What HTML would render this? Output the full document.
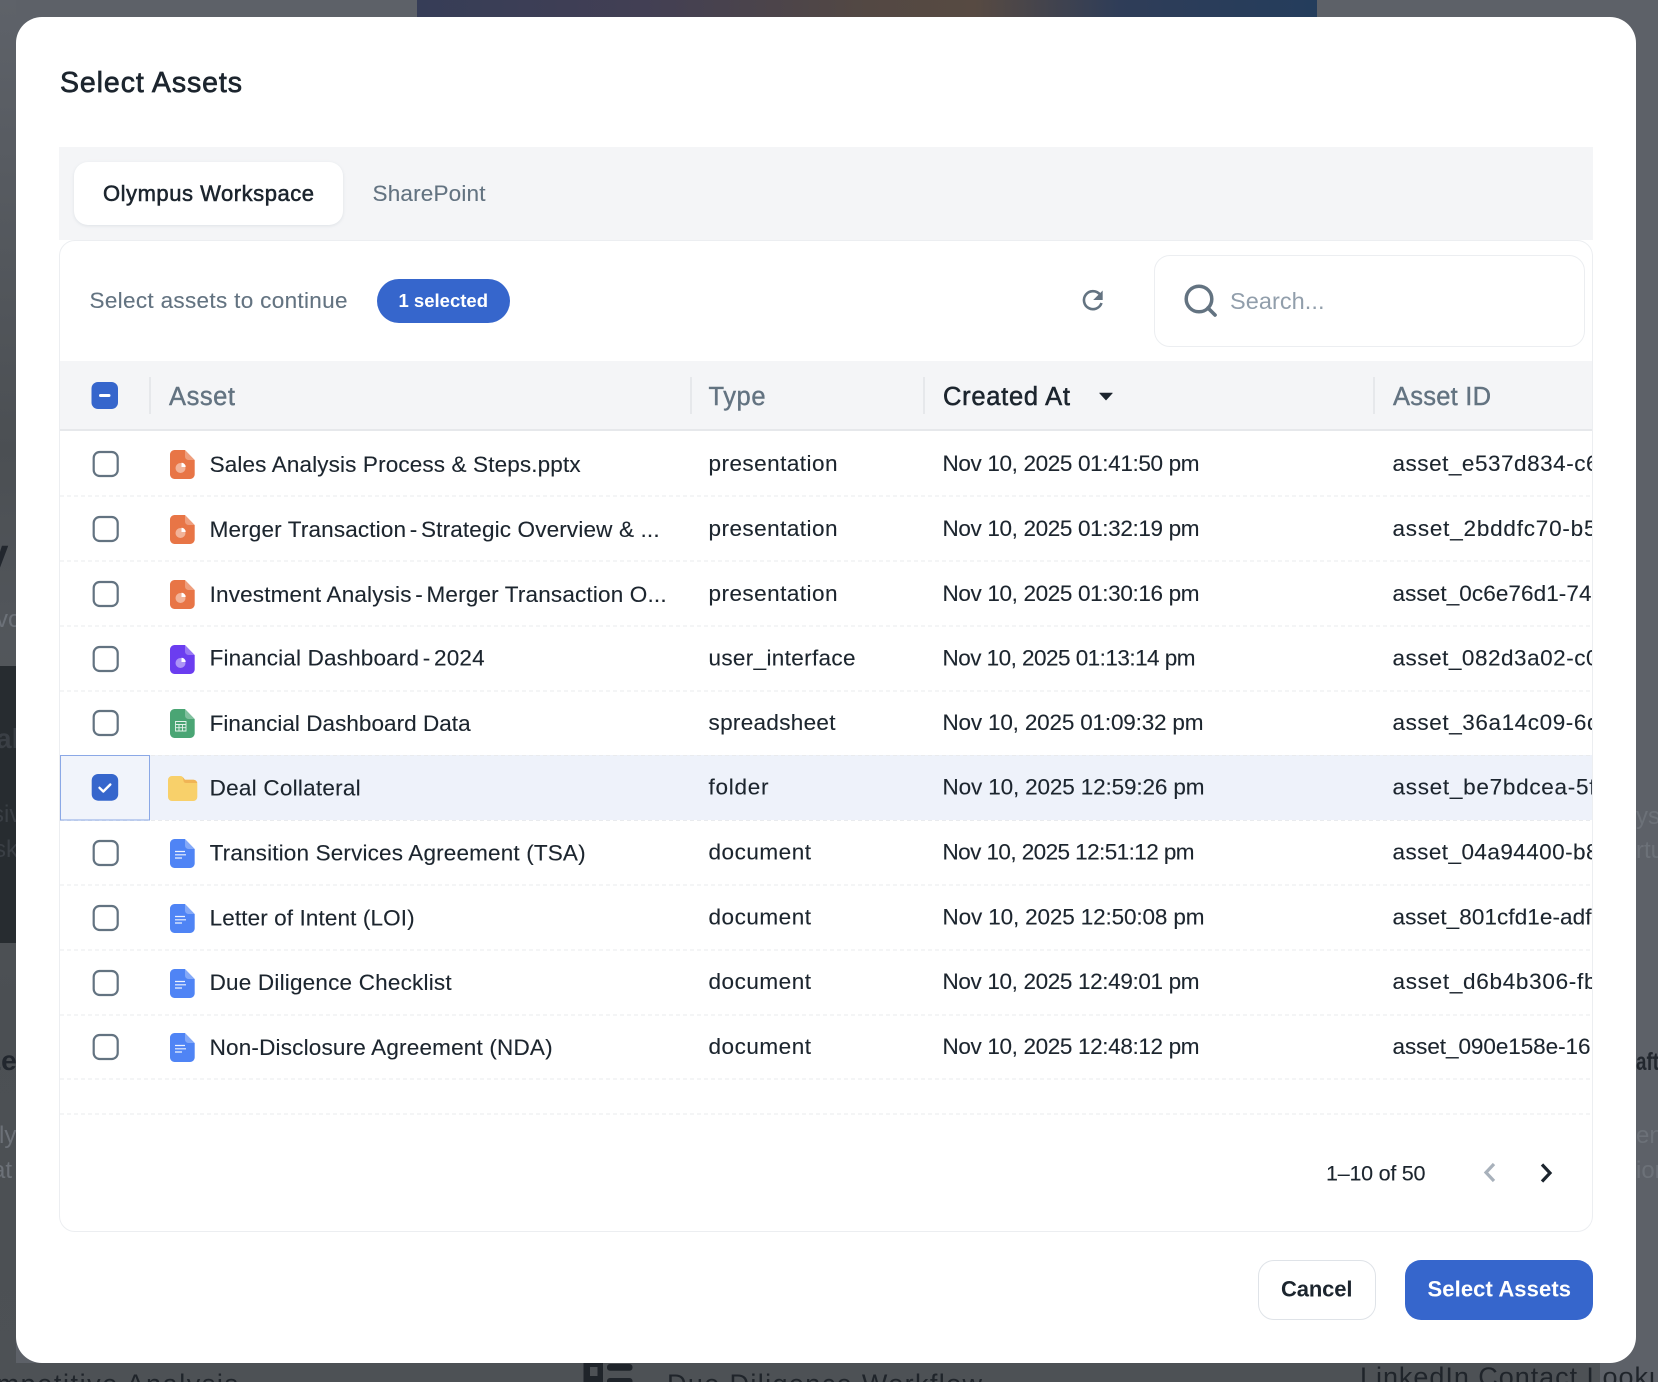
<!DOCTYPE html>
<html lang="en"><head><meta charset="utf-8"><title>Select Assets</title>
<style>
*{box-sizing:border-box}
html,body{margin:0;padding:0;width:1658px;height:1382px;overflow:hidden;background:#5d6168;font-family:"Liberation Sans",sans-serif}
.a{position:absolute}
svg{position:absolute;left:0;top:0}
text{font-family:"Liberation Sans",sans-serif;fill:#1c252e;font-size:22.5px;stroke:#1c252e;stroke-width:.12px}
.g{fill:#637381;stroke:#637381}
.m{stroke-width:.4px}
.h{font-size:25.5px}
.bgd{fill:#22272e;stroke:none;font-weight:bold;font-size:28px}
.bgl{fill:#6c7178;stroke:none;font-size:24px}
.bgb{fill:#1f242a;stroke:none;font-size:27px}
.t{word-spacing:-2.8px}
</style></head><body>
<div class="a" style="left:0;top:0;width:1658px;height:1382px;overflow:hidden">
  <div class="a" style="left:0;top:0;width:16px;height:1382px;background:linear-gradient(180deg,#5e6269 0,#4b4f53 450px,#52565b 640px,#4b4f53 1000px,#4d5155 100%)"></div>
  <div class="a" style="left:0;top:666px;width:16px;height:277px;background:#272c30"></div>
  <div class="a" style="left:0;top:1363px;width:1600px;height:19px;background:#4d5155"></div>
  <div class="a" style="left:417px;top:0;width:900px;height:18px;background:linear-gradient(90deg,#363d57 0,#423f54 25%,#534843 50%,#574a42 62%,#2f3d58 78%,#243d5c 100%)"></div>
</div>
<svg width="1658" height="1382" viewBox="0 0 1658 1382">
  <text x="-16" y="569" class="bgd" style="font-size:44px">y</text>
  <text x="-4" y="627" class="bgl">vo</text>
  <text x="-4" y="748" class="bgd" style="fill:#3a3f45;font-size:28px">al</text>
  <text x="-8" y="822" class="bgl" style="fill:#3a3f45">siv</text>
  <text x="-6" y="857" class="bgl" style="fill:#3a3f45">sk</text>
  <text x="-16" y="1070" class="bgd">Le</text>
  <text x="-1" y="1143" class="bgl">ly</text>
  <text x="-8" y="1178" class="bgl">at</text>
  <text x="1636" y="824" class="bgl">ys</text>
  <text x="1636" y="858" class="bgl">rtu</text>
  <text x="1636" y="1070" class="bgd" style="font-size:25px" textLength="23" lengthAdjust="spacingAndGlyphs">aft</text>
  <text x="1636" y="1143" class="bgl">en</text>
  <text x="1636" y="1178" class="bgl">ion</text>
  <text x="-20" y="1393" class="bgb" textLength="258">ompetitive Analysis</text>
  <text x="667" y="1393" class="bgb" textLength="315">Due Diligence Workflow</text>
  <text x="1360" y="1386" class="bgb" textLength="320">LinkedIn Contact Lookup</text>
  <path d="M583.500 1363H603V1382H583.500ZM590 1367V1376H597.500V1367Z" fill="#1f242a" fill-rule="evenodd"/>
  <rect x="607" y="1364" width="25.500" height="6.700" rx="3" fill="#1f242a"/>
  <rect x="607" y="1378" width="25.500" height="6.700" rx="3" fill="#1f242a"/>
</svg>

<div class="a" style="left:16px;top:17px;width:1620px;height:1346px;background:#fff;border-radius:26px"></div>
<div class="a" style="left:59px;top:147px;width:1534px;height:93px;background:#f4f5f7"></div>
<div class="a" style="left:74px;top:162px;width:269px;height:63px;background:#fff;border-radius:14px;box-shadow:0 1px 3px rgba(145,158,171,.22)"></div>
<div class="a" style="left:59px;top:240px;width:1534px;height:992px;background:#fff;border:1.5px solid #eceef1;border-radius:16px;overflow:hidden">
  <div class="a" style="left:0;top:119.5px;width:100%;height:70.500px;background:#f4f5f7;border-bottom:2px solid #e6e8eb"></div>
  <div class="a" style="left:90px;top:514px;width:1444px;height:65px;background:#eef2fa"></div>
</div>
<div class="a" style="left:149px;top:377px;width:2px;height:37px;background:#e6e8eb"></div>
<div class="a" style="left:689.500px;top:377px;width:2px;height:37px;background:#e6e8eb"></div>
<div class="a" style="left:923px;top:377px;width:2px;height:37px;background:#e6e8eb"></div>
<div class="a" style="left:1373px;top:377px;width:2px;height:37px;background:#e6e8eb"></div>
<div class="a" style="left:377px;top:279px;width:133px;height:44px;background:#3666cc;border-radius:22px"></div>
<div class="a" style="left:1154px;top:255px;width:431px;height:92px;background:#fff;border:1.5px solid #eceef1;border-radius:16px"></div>
<div class="a" style="left:1258px;top:1260px;width:118px;height:60px;background:#fff;border:1.5px solid #dfe3e8;border-radius:16px"></div>
<div class="a" style="left:1405px;top:1260px;width:188px;height:60px;background:#3666cc;border-radius:16px"></div>

<svg width="1658" height="1382" viewBox="0 0 1658 1382">
<defs>
  <clipPath id="idc"><rect x="1390" y="430" width="202" height="650"/></clipPath>
  <g id="dash"><path d="M60 0H1592" stroke="#e9ebee" stroke-width="1" stroke-dasharray="4 3" fill="none"/></g>
  <path id="doc" d="M4.500 0H15L24.700 10V24.500a4.500 4.500 0 0 1-4.500 4.500H4.500A4.500 4.500 0 0 1 0 24.500V4.500A4.500 4.500 0 0 1 4.500 0Z"/>
  <path id="fold" d="M15 0L24.700 10H18.500a3.500 3.500 0 0 1-3.500-3.500Z" fill="#fff" fill-opacity=".3"/>
  <g id="ppt"><use href="#doc" fill="#e87546"/><use href="#fold"/><circle cx="10.500" cy="18" r="5" fill="#fff" fill-opacity=".45"/><path d="M11.500 17V12.800a4.200 4.200 0 0 1 4.200 4.200Z" fill="#fff"/></g>
  <g id="ui"><use href="#doc" fill="#6b3df0"/><use href="#fold"/><circle cx="10.500" cy="18" r="5" fill="#fff" fill-opacity=".45"/><path d="M11.500 17V12.800a4.200 4.200 0 0 1 4.200 4.200Z" fill="#fff"/></g>
  <g id="xls"><use href="#doc" fill="#4aa574"/><use href="#fold"/><path d="M5.500 12.500h10.500v9.500H5.500ZM5.500 15.500h10.500M5.500 18.700h10.500M9 15.500V22M12.500 15.500V22" fill="none" stroke="#fff" stroke-opacity=".85" stroke-width=".9"/></g>
  <g id="dc"><use href="#doc" fill="#4f84f5"/><use href="#fold"/><path d="M5 12.500h10M5 15.800h11M5 19h7" stroke="#fff" stroke-opacity=".9" stroke-width="1.200" fill="none"/></g>
  <rect id="cb" x="1" y="1" width="24" height="24" rx="6" fill="#fff" stroke="#637381" stroke-width="2.200"/>
</defs>

<text x="60" y="92" textLength="182" style="font-size:28.500px;stroke-width:.7px">Select Assets</text>
<text x="103" y="201" textLength="211" style="font-size:22px;stroke-width:.55px">Olympus Workspace</text>
<text x="372.500" y="201" textLength="113" class="g" style="font-size:22.500px">SharePoint</text>
<text x="89.500" y="308" textLength="258" class="g">Select assets to continue</text>
<text x="398.500" y="307" textLength="89.500" style="fill:#fff;stroke:#fff;font-weight:bold;font-size:18.500px;stroke-width:0">1 selected</text>
<text x="1230" y="309" textLength="94.500" style="fill:#919eab;stroke:none;font-size:23.500px">Search...</text>

<path d="M1099.700 294.200A9 9 0 1 0 1101.500 303" fill="none" stroke="#637381" stroke-width="2.600"/>
<path d="M1102.700 290.500V300H1093.200Z" fill="#637381"/>
<circle cx="1199" cy="299" r="12.800" fill="none" stroke="#637381" stroke-width="3.500"/>
<path d="M1208 308L1215 315" stroke="#637381" stroke-width="3.700" stroke-linecap="round"/>

<rect x="91.500" y="382" width="26.500" height="27" rx="6.500" fill="#3666cc"/>
<rect x="99" y="394" width="11.500" height="3" rx="1.500" fill="#fff"/>
<text x="169" y="405" textLength="66" class="g h m">Asset</text>
<text x="708.500" y="405" textLength="57" class="g h m">Type</text>
<text x="943" y="405" textLength="127" class="h" style="stroke-width:.55px">Created At</text>
<path d="M1099.600 393H1112.400L1106 400Z" fill="#1c252e" stroke="#1c252e" stroke-width=".6" stroke-linejoin="round"/>
<text x="1393" y="405" textLength="98" class="g h m">Asset ID</text>

<use href="#dash" y="496"/><use href="#dash" y="561"/><use href="#dash" y="626"/><use href="#dash" y="691"/>
<use href="#dash" y="755.500"/><use href="#dash" y="820.500"/><use href="#dash" y="885"/><use href="#dash" y="950"/><use href="#dash" y="1015"/><use href="#dash" y="1079"/><use href="#dash" y="1114"/>

<rect x="60.500" y="755.500" width="89" height="64.500" fill="#f1f4fb" stroke="#8ba8e6" stroke-width="1"/>

<use href="#cb" x="92.700" y="451"/>
<use href="#cb" x="92.700" y="516"/>
<use href="#cb" x="92.700" y="581"/>
<use href="#cb" x="92.700" y="646"/>
<use href="#cb" x="92.700" y="710"/>
<rect x="91.700" y="774" width="26.500" height="26.700" rx="6.500" fill="#3666cc"/>
<path d="M99.500 787.800L103.300 791.500L110.300 784.500" fill="none" stroke="#fff" stroke-width="2.400" stroke-linecap="round" stroke-linejoin="round"/>
<use href="#cb" x="92.700" y="840"/>
<use href="#cb" x="92.700" y="905"/>
<use href="#cb" x="92.700" y="970"/>
<use href="#cb" x="92.700" y="1034"/>

<use href="#ppt" x="170" y="450"/>
<use href="#ppt" x="170" y="515"/>
<use href="#ppt" x="170" y="580"/>
<use href="#ui" x="170" y="645"/>
<use href="#xls" x="170" y="709"/>
<path d="M172 776h8.500a3 3 0 0 1 2.200 1l2.300 2.700H193.500a4 4 0 0 1 3.800 4V797a4 4 0 0 1-4 4H172a4 4 0 0 1-4-4V780a4 4 0 0 1 4-4Z" fill="#f8d06a"/>
<path d="M182.700 777l2.300 2.700H193.500a4 4 0 0 1 3.800 3.300H186a3 3 0 0 1-2.200-1Z" fill="#f0b455"/>
<use href="#dc" x="170" y="839"/>
<use href="#dc" x="170" y="904"/>
<use href="#dc" x="170" y="969"/>
<use href="#dc" x="170" y="1033"/>

<text x="209.600" y="472" textLength="371">Sales Analysis Process &amp; Steps.pptx</text>
<text x="209.600" y="537" textLength="450">Merger Transaction<tspan class="t"> - </tspan>Strategic Overview &amp; ...</text>
<text x="209.600" y="602" textLength="457">Investment Analysis<tspan class="t"> - </tspan>Merger Transaction O...</text>
<text x="209.600" y="665.500" textLength="275">Financial Dashboard<tspan class="t"> - </tspan>2024</text>
<text x="209.600" y="731" textLength="261">Financial Dashboard Data</text>
<text x="209.600" y="795.500" textLength="151">Deal Collateral</text>
<text x="209.600" y="860.500" textLength="376">Transition Services Agreement (TSA)</text>
<text x="209.600" y="925.500" textLength="205">Letter of Intent (LOI)</text>
<text x="209.600" y="990" textLength="242">Due Diligence Checklist</text>
<text x="209.600" y="1055" textLength="343">Non-Disclosure Agreement (NDA)</text>

<text x="708.500" y="471" textLength="129">presentation</text>
<text x="708.500" y="536" textLength="129">presentation</text>
<text x="708.500" y="601" textLength="129">presentation</text>
<text x="708.500" y="665.500" textLength="147">user_interface</text>
<text x="708.500" y="730" textLength="127">spreadsheet</text>
<text x="708.500" y="794.500" textLength="60">folder</text>
<text x="708.500" y="859.500" textLength="102.500">document</text>
<text x="708.500" y="924.500" textLength="102.500">document</text>
<text x="708.500" y="989" textLength="102.500">document</text>
<text x="708.500" y="1054" textLength="102.500">document</text>

<text x="942.500" y="471" textLength="257">Nov 10, 2025 01:41:50 pm</text>
<text x="942.500" y="536" textLength="257">Nov 10, 2025 01:32:19 pm</text>
<text x="942.500" y="601" textLength="257">Nov 10, 2025 01:30:16 pm</text>
<text x="942.500" y="665.500" textLength="253">Nov 10, 2025 01:13:14 pm</text>
<text x="942.500" y="730" textLength="261">Nov 10, 2025 01:09:32 pm</text>
<text x="942.500" y="794.500" textLength="262">Nov 10, 2025 12:59:26 pm</text>
<text x="942.500" y="859.500" textLength="252">Nov 10, 2025 12:51:12 pm</text>
<text x="942.500" y="924.500" textLength="262">Nov 10, 2025 12:50:08 pm</text>
<text x="942.500" y="989" textLength="257">Nov 10, 2025 12:49:01 pm</text>
<text x="942.500" y="1054" textLength="257">Nov 10, 2025 12:48:12 pm</text>

<g clip-path="url(#idc)">
<text x="1392.500" y="471" textLength="206">asset_e537d834-c6</text>
<text x="1392.500" y="536" textLength="204">asset_2bddfc70-b5</text>
<text x="1392.500" y="601" textLength="199">asset_0c6e76d1-74</text>
<text x="1392.500" y="665.500" textLength="206">asset_082d3a02-c0</text>
<text x="1392.500" y="730" textLength="207">asset_36a14c09-6d</text>
<text x="1392.500" y="794.500" textLength="203">asset_be7bdcea-5f</text>
<text x="1392.500" y="859.500" textLength="206">asset_04a94400-b8</text>
<text x="1392.500" y="924.500" textLength="199">asset_801cfd1e-adf</text>
<text x="1392.500" y="989" textLength="204">asset_d6b4b306-fb</text>
<text x="1392.500" y="1054" textLength="198">asset_090e158e-16</text>
</g>

<text x="1326" y="1180.500" textLength="99.500" style="font-size:21.500px">1–10 of 50</text>
<path d="M1494 1164L1486 1172.500L1494 1181" fill="none" stroke="#a8b1bb" stroke-width="3.200"/>
<path d="M1542 1164.500L1550 1173L1542 1181.500" fill="none" stroke="#1c252e" stroke-width="3.200"/>
<text x="1281" y="1296.500" textLength="71.500" style="font-weight:bold;stroke-width:0;font-size:22px">Cancel</text>
<text x="1427.500" y="1296.500" textLength="143.500" style="fill:#fff;stroke:none;font-weight:bold;font-size:22px">Select Assets</text>
</svg>
</body></html>
